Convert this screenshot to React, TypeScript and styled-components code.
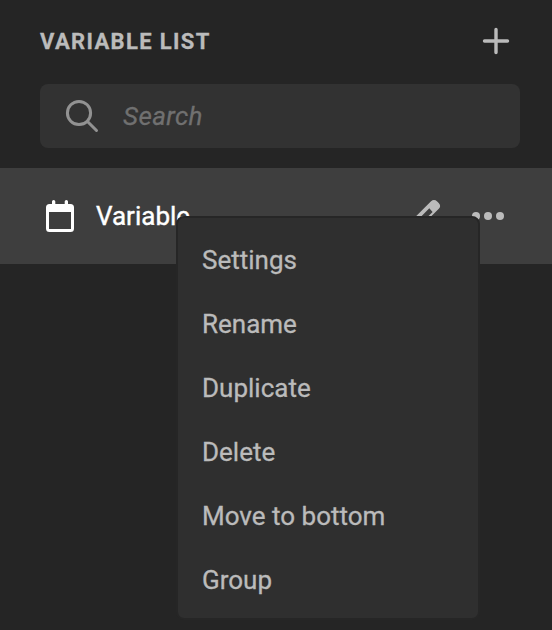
import React from "react";
import styled, { createGlobalStyle } from "styled-components";

const GlobalStyle = createGlobalStyle`
  *, *::before, *::after { box-sizing: border-box; }
  body { margin: 0; background: #252525; font-family: Roboto, "Liberation Sans", sans-serif; overflow: hidden; }
`;

const Panel = styled.main`
  position: relative;
  width: 552px;
  height: 630px;
  overflow: hidden;
  background: #252525;
`;

const Header = styled.header`
  display: flex;
  align-items: center;
  justify-content: space-between;
  height: 84px;
  padding: 0 40px 2px;
`;

const Title = styled.h1`
  margin: 2px 0 0;
  color: #bbb;
  font-size: 22px;
  line-height: 26px;
  font-weight: 700;
  letter-spacing: 1.35px;
  -webkit-text-stroke: 0.3px currentColor;
`;

const IconButton = styled.button`
  display: flex;
  padding: 0;
  border: 0;
  background: none;
  color: #bbb;
`;

const SearchBox = styled.label`
  display: flex;
  align-items: center;
  gap: 19px;
  height: 64px;
  margin: 0 32px 20px 40px;
  padding-left: 24px;
  border-radius: 8px;
  background: #323232;
  color: #929292;
`;

const Placeholder = styled.span`
  color: #707070;
  font-size: 26px;
  line-height: 32px;
  font-style: italic;
  letter-spacing: 0.4px;
  -webkit-text-stroke: 0.3px currentColor;
`;

const Row = styled.div`
  display: flex;
  align-items: center;
  height: 96px;
  padding: 0 46px 0 44px;
  background: #3e3e3e;
  color: #fff;
`;

const RowName = styled.span`
  flex: 1;
  margin-left: 20px;
  font-size: 26px;
  line-height: 32px;
  -webkit-text-stroke: 0.4px currentColor;
`;

const RowActions = styled.div`
  display: flex;
  align-items: center;
  gap: 26px;
`;

const Menu = styled.ul`
  position: absolute;
  left: 176px;
  top: 216px;
  width: 304px;
  height: 404px;
  margin: 0;
  padding: 10px 0;
  list-style: none;
  border: 2px solid #262626;
  border-radius: 8px;
  background: #2f2f2f;
`;

const MenuItem = styled.li`
  display: flex;
  align-items: center;
  height: 64px;
  padding: 0 24px;
  color: #bbb;
  font-size: 26px;
  line-height: 32px;
  -webkit-text-stroke: 0.3px currentColor;
`;

const actions = ["Settings", "Rename", "Duplicate", "Delete", "Move to bottom", "Group"];

const PlusIcon = () => (
  <svg width="32" height="32" viewBox="0 0 32 32" fill="none" stroke="currentColor" strokeWidth="3.4" strokeLinecap="round">
    <path d="M16 4.5v23M4.5 16h23" />
  </svg>
);

const SearchIcon = () => (
  <svg width="40" height="40" viewBox="0 0 40 40" fill="none" stroke="currentColor" strokeWidth="3" strokeLinecap="round">
    <circle cx="15" cy="17" r="11.6" />
    <path d="M23.5 25.5L32.5 34.5" />
  </svg>
);

const CalendarIcon = () => (
  <svg width="32" height="36" viewBox="0 0 32 36" fill="currentColor">
    <path
      fillRule="evenodd"
      d="M8 6V3.6a1.6 1.6 0 0 1 3.3 0V6h9.4V3.6a1.6 1.6 0 0 1 3.3 0V6h2.5A3.5 3.5 0 0 1 30 9.500v21a3.500 3.500 0 0 1-3.500 3.500h-21A3.500 3.500 0 0 1 2 30.500v-21A3.500 3.500 0 0 1 5.500 6zM5 14v17h22V14z"
    />
  </svg>
);

const PencilIcon = () => (
  <svg width="32" height="32" viewBox="0 0 32 32" fill="currentColor">
    <path
      fillRule="evenodd"
      d="M18.800 1.500Q22-1.300 25.200 1.500L26.700 3.100Q29.500 6 26.800 8.800L9 26.500 1 28l1.500-10.200zM17.300 8.300L6 19.700l-1 4.300 4.500-1L20.600 12z"
    />
  </svg>
);

const MoreIcon = () => (
  <svg width="36" height="8" viewBox="0 0 36 8" fill="currentColor">
    <circle cx="6" cy="4" r="4" />
    <circle cx="18" cy="4" r="4" />
    <circle cx="30" cy="4" r="4" />
  </svg>
);

export default function App() {
  return (
    <>
      <GlobalStyle />
      <Panel>
        <Header>
          <Title>VARIABLE LIST</Title>
          <IconButton aria-label="Add variable"><PlusIcon /></IconButton>
        </Header>
        <SearchBox>
          <SearchIcon />
          <Placeholder>Search</Placeholder>
        </SearchBox>
        <Row>
          <CalendarIcon />
          <RowName>Variable</RowName>
          <RowActions>
            <IconButton aria-label="Edit"><PencilIcon /></IconButton>
            <IconButton aria-label="More"><MoreIcon /></IconButton>
          </RowActions>
        </Row>
        <Menu>
          {actions.map((action) => <MenuItem key={action}>{action}</MenuItem>)}
        </Menu>
      </Panel>
    </>
  );
}
